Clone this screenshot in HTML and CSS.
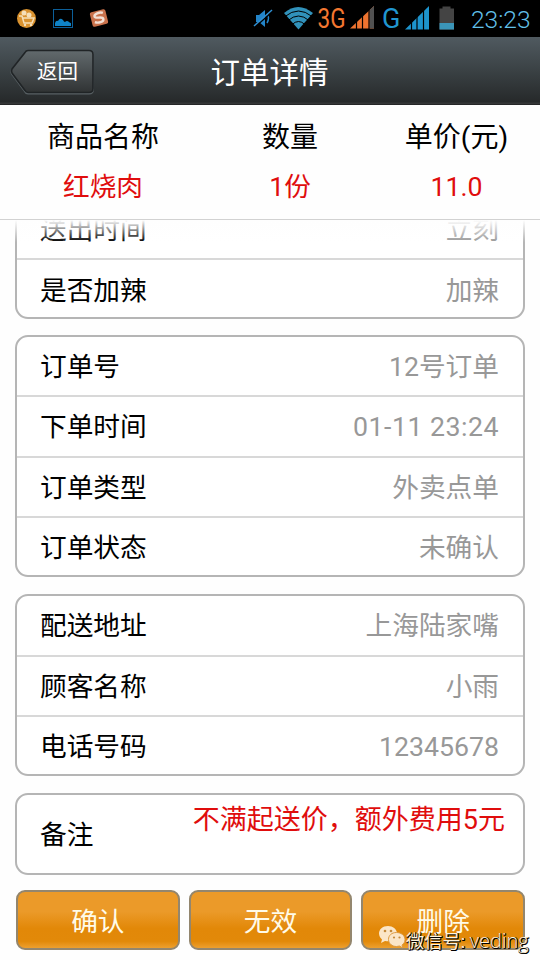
FILE: index.html
```html
<!DOCTYPE html>
<html lang="zh-CN">
<head>
    <meta charset="UTF-8">
    <meta name="viewport" content="width=device-width, initial-scale=1.0">
    <title>订单详情</title>
    <link rel="stylesheet" href="styles.css">
</head>
<body>
    <div class="status-bar">
        <svg class="status-left" width="120" height="37" viewBox="0 0 120 37">
            <!-- shopping cart -->
            <circle cx="26.500" cy="18.500" r="9.500" fill="#d9922f"/>
            <path d="M19 16h3l2 7h8l2-5H23" fill="none" stroke="#f5dfb8" stroke-width="1.500"/>
            <circle cx="24" cy="13" r="2.500" fill="#f5dfb8"/>
            <circle cx="29" cy="15" r="2.500" fill="#f5dfb8"/>
            <circle cx="25" cy="25" r="1.200" fill="#f5dfb8"/>
            <circle cx="31" cy="25" r="1.200" fill="#f5dfb8"/>
            <!-- gallery -->
            <rect x="53.500" y="9.500" width="19" height="18" fill="none" stroke="#0c5f99"/>
            <path d="M55 26v-3q1-3 3-2 2-4 5-1 1 2 2 2 2-2 4 0 1 1 2 1v3z" fill="#0f82c6"/>
            <!-- input method -->
            <g transform="rotate(-14 99 18)">
                <rect x="91" y="10.500" width="16" height="15" rx="2" fill="#c9714b"/>
                <path d="M104 14c-3-2-9-1-9 1.500 0 3 8 1 8 4.500 0 3-6 3-9 1" fill="none" stroke="#f3e0d5" stroke-width="2.400"/>
            </g>
        </svg>
        <svg class="status-right" width="215" height="37" viewBox="250 0 215 37">
            <!-- muted speaker -->
            <path d="M256 15h3l6-5v17l-6-5h-3z" fill="#2384c9"/>
            <path d="M267 14q3 4 0 9" fill="none" stroke="#2384c9" stroke-width="1.500"/>
            <path d="M272.500 11.500l-18 16" stroke="#000" stroke-width="1.500"/>
            <path d="M272 10l-18 16" stroke="#2f8fd2" stroke-width="1.500"/>
            <!-- wifi -->
            <path d="M284 13q14-12 29 0L298.500 29.500z" fill="#3192bb"/>
            <path d="M285 16.500q13.500-11 27 0M288 20.500q10.500-9 21 0M292 24.500q6.500-6 13 0" fill="none" stroke="#000" stroke-width="1"/>
            <text class="net net-3g" x="317.500" y="28" textLength="28" lengthAdjust="spacingAndGlyphs">3G</text>
            <path d="M350 28.500h24V6z" fill="#ef7430"/>
            <path d="M369.500 28.500h4.500V6l-4.500 4z" fill="#515151"/>
            <path d="M356.500 5v24M362.500 5v24M369 5v24" stroke="#000" stroke-width="1.200"/>
            <text class="net net-g" x="382" y="27.500">G</text>
            <path d="M405 29.500h24V6z" fill="#1d94cd"/>
            <path d="M411.500 5v25M417 5v25M423.500 5v25" stroke="#000" stroke-width="1.200"/>
            <!-- battery -->
            <path d="M439.500 8.500h3V6.500h8v2h3.500v21h-14.500z" fill="#444"/>
            <path d="M439.500 23h14.500v6.500h-14.500z" fill="#3b95b8"/>
        </svg>
        <span class="clock">23:23</span>
    </div>

    <div class="header">
        <a class="back" href="#">
            <svg class="back-shape" width="86" height="46" viewBox="0 0 86 46">
                <defs>
                    <linearGradient id="backFill" x1="0" y1="0" x2="0" y2="1">
                        <stop offset="0" stop-color="#626a6d"/>
                        <stop offset="1" stop-color="#303334"/>
                    </linearGradient>
                </defs>
                <path d="M18 2.500h61q4 0 4 4v34q0 4-4 4H18q-2 0-3-2L2 25q-1-2 0-4L15 4.500q1-2 3-2z" fill="none" stroke="#586064" stroke-width="2"/>
                <path d="M18 1.500h61q4 0 4 4v34q0 4-4 4H18q-2 0-3-2L2 24q-1-2 0-4L15 3.500q1-2 3-2z" fill="url(#backFill)" stroke="#202426" stroke-width="1.600"/>
            </svg>
            <span class="back-text">返回</span>
        </a>
        <h1>订单详情</h1>
    </div>

    <div class="goods">
        <div class="goods-col">
            <div class="goods-title">商品名称</div>
            <div class="goods-value">红烧肉</div>
        </div>
        <div class="goods-col">
            <div class="goods-title">数量</div>
            <div class="goods-value">1份</div>
        </div>
        <div class="goods-col">
            <div class="goods-title">单价(元)</div>
            <div class="goods-value">11.0</div>
        </div>
    </div>

    <div class="content">
        <div class="card card-scrolled">
            <div class="row"><span>送出时间</span><span class="value">立刻</span></div>
            <div class="row"><span>是否加辣</span><span class="value">加辣</span></div>
        </div>
        <div class="card">
            <div class="row"><span>订单号</span><span class="value">12号订单</span></div>
            <div class="row"><span>下单时间</span><span class="value time">01-11 23:24</span></div>
            <div class="row"><span>订单类型</span><span class="value">外卖点单</span></div>
            <div class="row"><span>订单状态</span><span class="value">未确认</span></div>
        </div>
        <div class="card">
            <div class="row"><span>配送地址</span><span class="value">上海陆家嘴</span></div>
            <div class="row"><span>顾客名称</span><span class="value">小雨</span></div>
            <div class="row"><span>电话号码</span><span class="value">12345678</span></div>
        </div>
        <div class="card remark">
            <span>备注</span>
            <span class="remark-text">不满起送价，额外费用5元</span>
        </div>
        <div class="buttons">
            <button type="button">确认</button>
            <button type="button">无效</button>
            <button type="button">删除</button>
        </div>
    </div>

    <div class="watermark">
        <svg width="28" height="24" viewBox="0 0 28 24">
            <path d="M10 1C4.500 1 1 4.500 1 8.500c0 2.500 1.500 4.500 3 6L3 18l4-2q7 1 10-2 2.500-3 2-6c-.500-4-4-7-9-7z" fill="#fbe6c8"/>
            <path d="M18.500 7.500c-5 0-8 3-8 7s3.500 7 8 7l3-.500 3.500 2-1-3c2-1.500 3-3 3-5.500 0-4-4-7-8.500-7z" fill="#fbe6c8" stroke="#dc9a42"/>
            <g fill="#c58a3c">
                <circle cx="7" cy="6" r="1.300"/>
                <circle cx="13" cy="6" r="1.300"/>
                <circle cx="16" cy="12.500" r="1.100"/>
                <circle cx="21.500" cy="12.500" r="1.100"/>
            </g>
        </svg>
        <span>微信号: <span class="wechat-id">veding</span></span>
    </div>
</body>
</html>
```
FILE: styles.css
```css
* {
    box-sizing: border-box;
}
body {
    width: 540px;
    height: 960px;
    margin: 0;
    overflow: hidden;
    position: relative;
    display: flex;
    flex-direction: column;
    background-color: #fefefe;
    color: #000;
    font-family: Roboto, "Noto Sans CJK SC", sans-serif;
    font-size: 26.7px;
}
.status-bar {
    height: 37px;
    flex: none;
    display: flex;
    justify-content: space-between;
    background-color: #000;
}
.status-right {
    margin-left: auto;
}
.net {
    font-size: 27px;
    font-family: Roboto, sans-serif;
}
.net-3g {
    fill: #f47730;
}
.net-g {
    fill: #2096d0;
}
.clock {
    width: 75px;
    padding-left: 6px;
    color: #62c0ea;
    font-size: 24.5px;
    line-height: 39px;
    font-weight: 300;
}
.header {
    height: 68px;
    flex: none;
    position: relative;
    background: linear-gradient(#505a60, #3a4144 50%, #26292a 96%, #3d3f40 97%, #1e1f20);
    color: #fff;
}
.header h1 {
    margin: 0;
    padding-right: 1px;
    text-align: center;
    font-size: 29.5px;
    font-weight: normal;
    line-height: 72px;
}
.back {
    position: absolute;
    left: 10px;
    top: 12px;
    width: 86px;
    height: 46px;
    color: #fff;
    text-decoration: none;
}
.back-shape {
    position: absolute;
    left: 0;
    top: 0;
}
.back-text {
    position: relative;
    display: block;
    padding-left: 27px;
    font-size: 20.5px;
    line-height: 47px;
}
.goods {
    height: 115px;
    flex: none;
    display: grid;
    grid-template-columns: 206px 168px 165px;
    padding-top: 8px;
    border-bottom: 1px solid #d2d2d2;
    text-align: center;
}
.goods-title {
    font-size: 28px;
    line-height: 50px;
}
.goods-value {
    color: #e00d0d;
    line-height: 49px;
}
.content {
    flex: 1;
    position: relative;
    overflow: hidden;
    padding: 0 15px;
}
/* fade under the fixed goods table */
.content::before {
    content: "";
    position: absolute;
    left: 0;
    top: 0;
    width: 100%;
    height: 22px;
    z-index: 1;
    background: linear-gradient(#fefefe, rgba(254, 254, 254, 0));
}
.card {
    margin-bottom: 17px;
    border: 2px solid #b5b5b5;
    border-radius: 13px;
    background-color: #fff;
}
.card-scrolled {
    margin-top: -23px;
    margin-bottom: 16px;
}
.row {
    height: 60.3px;
    display: flex;
    justify-content: space-between;
    padding: 0 24px 0 23px;
    border-bottom: 2px solid #d8d8d8;
    line-height: 60px;
}
.row:last-child {
    height: 57.5px;
    border-bottom: none;
}
.card-scrolled .row {
    height: 61px;
    line-height: 62px;
}
.card-scrolled .row:last-child {
    height: 57px;
}
.value {
    color: #989898;
}
.time {
    letter-spacing: 0.5px;
}
.remark {
    height: 82px;
    display: flex;
    justify-content: space-between;
    margin-bottom: 15px;
    padding: 0 18px 0 23px;
    line-height: 81px;
}
.remark-text {
    color: #e00d0d;
    font-size: 27px;
    line-height: 50px;
    white-space: nowrap;
}
.buttons {
    display: flex;
    gap: 9px;
    padding-left: 1px;
}
.buttons button {
    flex: 1;
    height: 60px;
    padding: 0 0 1px;
    border: 2px solid #93866e;
    border-radius: 9px;
    background: linear-gradient(#eb9a29, #eb9a29 35%, #e28808 65%, #e28909 88%, #eda02f);
    color: #fffbe8;
    font-family: inherit;
    font-size: 26.7px;
}
.watermark {
    position: absolute;
    left: 378px;
    top: 925px;
    z-index: 2;
    display: flex;
    color: #fff4dc;
    font-size: 18.3px;
    line-height: 31px;
    white-space: nowrap;
    text-shadow: 1px 1px 0 #000, 1px 0 0 #000, 0 1px 0 #000;
}
.wechat-id {
    font-family: "Open Sans", sans-serif;
    font-size: 20px;
    font-weight: 300;
}
```
